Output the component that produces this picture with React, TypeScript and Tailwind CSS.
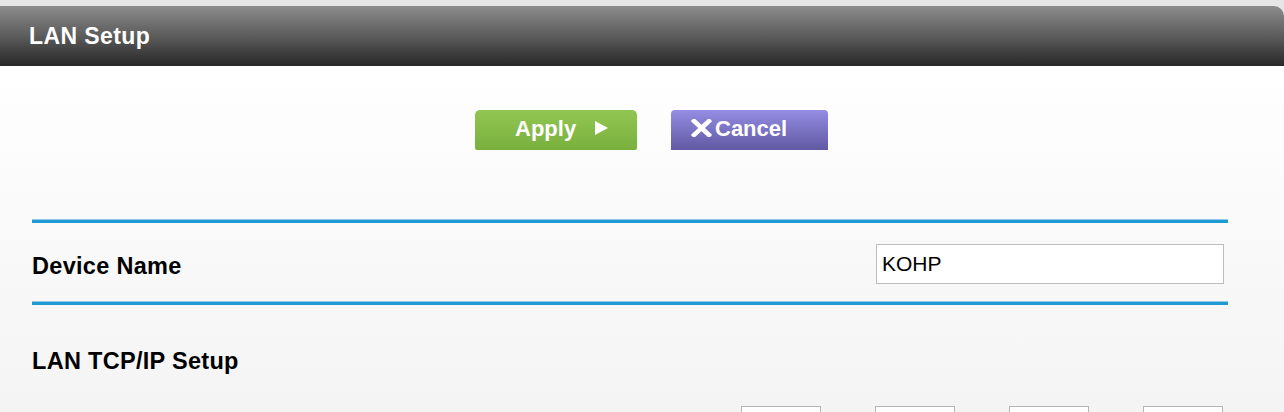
import { useState } from "react";

const ipParts = ["192", "168", "1", "1"];

function Section({ children }: { children: React.ReactNode }) {
  return <div className="mx-[32px] w-[1196px]">{children}</div>;
}

function BlueRule() {
  return (
    <div className="h-[4px] w-full border-t border-[#8fcbe8] bg-[#1f9ad3]" />
  );
}

export default function App() {
  const [deviceName, setDeviceName] = useState("KOHP");

  return (
    <div
      className="h-[412px] w-[1284px] overflow-hidden bg-[#e6e6e6] pt-[6px]"
      style={{ fontFamily: '"Liberation Sans", Arial, Helvetica, sans-serif' }}
    >
      {/* header bar */}
      <div className="flex h-[60px] items-center rounded-tr-[10px] bg-gradient-to-b from-[#8c8c8c] via-[#5c5c5c] to-[#282828] pl-[29px]">
        <h1 className="text-[23px] font-bold tracking-[0.4px] text-white">LAN Setup</h1>
      </div>

      <div className="h-[346px] bg-gradient-to-b from-white via-[#f9f9f9] to-[#f4f4f4]">
        {/* action buttons */}
        <div className="flex gap-[34px] pl-[475px] pt-[44px]">
          <button className="flex h-[40px] w-[162px] items-center gap-[19px] rounded-t-[5px] rounded-b-[2px] bg-gradient-to-b from-[#92c652] to-[#79b03d] pb-[4px] pl-[40px] text-[22px] font-bold text-white">
            <span>Apply</span>
            <svg width="13" height="14" viewBox="0 0 13 14">
              <polygon points="0,0 13,7 0,14" fill="white" />
            </svg>
          </button>
          <button className="flex h-[40px] w-[157px] items-center gap-[3px] rounded-t-[4px] bg-gradient-to-b from-[#948de4] to-[#6159a2] pb-[4px] pl-[20px] text-[22px] font-bold text-white">
            <svg width="21" height="18" viewBox="0 0 21 18">
              <path d="M3 2 L18 16 M18 2 L3 16" stroke="white" strokeWidth="4.5" strokeLinecap="square" />
            </svg>
            <span>Cancel</span>
          </button>
        </div>

        <Section>
          <div className="mt-[69px]">
            <BlueRule />
          </div>
          <div className="flex h-[78px] items-center justify-between">
            <span className="pt-[9px] text-[23.5px] font-bold tracking-[0.3px] text-black">Device Name</span>
            <input
              value={deviceName}
              onChange={(e) => setDeviceName(e.target.value)}
              className="mr-[4px] mt-[3px] h-[40px] w-[348px] border border-[#bdbdbd] bg-white px-[5px] text-[21px] text-black outline-none"
            />
          </div>
          <BlueRule />
          <div className="flex h-[101px] items-center pt-[12px]">
            <span className="text-[23.5px] font-bold tracking-[0.3px] text-black">LAN TCP/IP Setup</span>
          </div>
          <div className="flex justify-end gap-[54px] pr-[5px]">
            {ipParts.map((p, i) => (
              <input
                key={i}
                defaultValue={p}
                className="h-[30px] w-[80px] border border-[#b5b5b5] bg-white px-[4px] text-[18px] outline-none"
              />
            ))}
          </div>
        </Section>
      </div>
    </div>
  );
}
